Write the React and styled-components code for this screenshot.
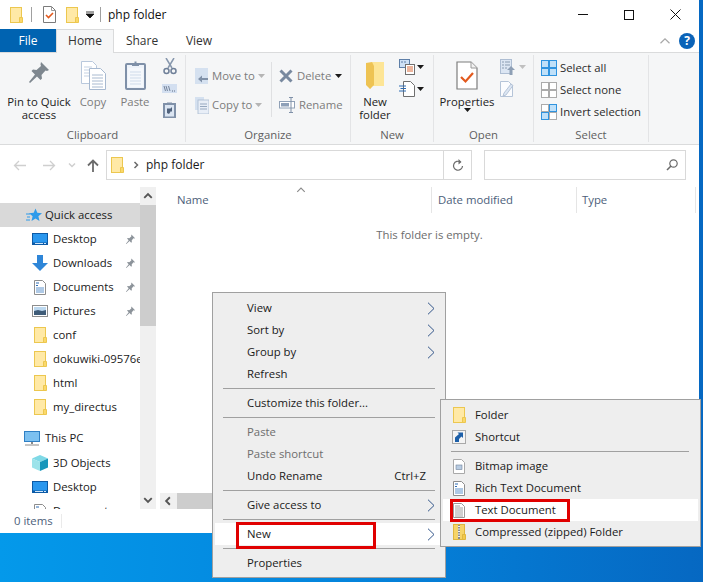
import React from 'react';
import styled, { createGlobalStyle } from 'styled-components';

const GlobalStyle = createGlobalStyle`
  html, body {
    margin: 0;
    padding: 0;
  }
  body {
    width: 703px;
    height: 582px;
    overflow: hidden;
    font-family: "Open Sans", "Noto Sans", sans-serif;
    font-size: 11.35px;
    color: #1a1a1a;
  }
`;

/* icons */
const Folder = ({ w = 13, h = 16 }) => (
  <svg width={w} height={h} viewBox="0 0 13 16">
    <rect x="0.5" y="0.5" width="11" height="15" fill="#ffe9a6" stroke="#ecc74f" />
    <path d="M9.5 15.5v-5h3v5z" fill="#fbd869" stroke="#ecc74f" />
  </svg>
);

const CheckDoc = ({ w = 13, h = 17 }) => (
  <svg width={w} height={h} viewBox="0 0 13 17">
    <path d="M.5.5h8l4 4v12H.5z" fill="#fff" stroke="#7b7b7b" />
    <path d="M8.5.5v4h4" fill="none" stroke="#9a9a9a" />
    <path d="M3 9l2.5 2.5L10 7" fill="none" stroke="#e2591d" strokeWidth="1.6" />
  </svg>
);

const Caret = ({ color = '#1a1a1a' }) => (
  <svg width="7" height="4" viewBox="0 0 7 4">
    <path d="M0 0h7L3.5 4z" fill={color} />
  </svg>
);

const MenuChevron = () => (
  <svg width="8" height="13" viewBox="0 0 8 13">
    <path d="M1 .7l6 5.8-6 5.8" fill="none" stroke="#33568a" strokeWidth="1" />
  </svg>
);

const PinLarge = () => (
  <svg width="22" height="24" viewBox="0 0 22 24">
    <path d="M13 1l8 8-2 1-1.500-.5-4 4.500.5 3.500-1.500 1.500-3.500-3.500L2 22l-1-1 6-7.500L3.500 10 5 8.500l3.500.5L13 5l-.5-1.500z" fill="#7e878f" />
  </svg>
);

const PinSmall = () => (
  <svg width="11" height="11" viewBox="0 0 22 24">
    <path d="M13 1l8 8-2 1-1.500-.5-4 4.500.5 3.500-1.500 1.500-3.500-3.500L2 22l-1-1 6-7.500L3.500 10 5 8.500l3.500.5L13 5l-.5-1.500z" fill="#8c939a" />
  </svg>
);

const CopyLarge = () => (
  <svg width="25" height="29" viewBox="0 0 25 29">
    <path d="M.5.5h11l4 4v18H.5z" fill="#fff" stroke="#b9c8dc" />
    <path d="M3 6h8M3 9h10M3 12h10M3 15h10" stroke="#c5d2e3" />
    <path d="M8.500 7.500h11l5 5v16h-16z" fill="#fff" stroke="#a7b9d0" />
    <path d="M11 14h11M11 17h11M11 20h11M11 23h11M11 26h11" stroke="#a9bad0" />
  </svg>
);

const PasteLarge = () => (
  <svg width="21" height="29" viewBox="0 0 21 29">
    <rect x="1" y="3" width="19" height="25" rx="1" fill="#eef3fa" stroke="#7f90a8" strokeWidth="2" />
    <rect x="3" y="7" width="15" height="19" fill="#f5f8fc" />
    <path d="M5 11h11M5 14h11M5 17h11M5 20h11M5 23h11" stroke="#cfdbea" />
    <path d="M7 5V2h2.500V.5h2V2H14v3z" fill="#7f90a8" />
  </svg>
);

const Scissors = () => (
  <svg width="14" height="17" viewBox="0 0 14 17">
    <path d="M3 0l6 10M11 0L5 10" stroke="#8797ad" strokeWidth="1.500" fill="none" />
    <circle cx="3.500" cy="13" r="2.500" fill="none" stroke="#6f8099" strokeWidth="1.500" />
    <circle cx="10.500" cy="13" r="2.500" fill="none" stroke="#6f8099" strokeWidth="1.500" />
  </svg>
);

const CopyPath = () => (
  <svg width="15" height="9" viewBox="0 0 15 9">
    <rect width="15" height="9" fill="#d3dff0" />
    <path d="M2 2l1.500 5M4 2l1.500 5M6.500 2L8 7" stroke="#5c6c84" strokeWidth=".8" fill="none" />
    <path d="M10 7h1M12 7h1" stroke="#5c6c84" />
  </svg>
);

const PasteShortcut = () => (
  <svg width="13" height="16" viewBox="0 0 13 16">
    <rect x="1" y="2" width="11" height="13.500" fill="#dbe5f2" stroke="#7f90a8" strokeWidth="2" />
    <path d="M4 .5h5V3H4z" fill="#7f90a8" />
    <path d="M4 9V6.500h3.500L9 5v5L8 9l-2 3-2-1z" fill="#50627c" />
  </svg>
);

const MoveTo = () => (
  <svg width="14" height="16" viewBox="0 0 14 16">
    <rect width="13" height="16" fill="#d5e1f0" />
    <path d="M13 10H7V7.500L3 11l4 3.500V12h6z" fill="#8091a8" />
  </svg>
);

const CopyTo = () => (
  <svg width="14" height="17" viewBox="0 0 14 17">
    <rect width="9" height="13" fill="#d5e1f0" />
    <rect x="3" y="3" width="11" height="14" fill="#e8eef7" stroke="#a9bad0" strokeWidth=".8" />
    <path d="M5 7h7M5 9.500h7M5 12h7" stroke="#96a8bf" />
  </svg>
);

const DeleteX = () => (
  <svg width="14" height="14" viewBox="0 0 14 14">
    <path d="M1.500 1.500l11 11M12.500 1.500l-11 11" stroke="#78899f" strokeWidth="3" />
  </svg>
);

const RenameIcon = () => (
  <svg width="16" height="16" viewBox="0 0 16 16">
    <rect x=".5" y="4.500" width="15" height="6.500" fill="#fff" stroke="#90a1b7" />
    <rect x="2" y="6" width="8" height="3.500" fill="#8ea0b8" />
    <path d="M10 .5h4M12 .5v15M10 15.500h4" stroke="#7f90a8" />
  </svg>
);

const NewFolderLarge = () => (
  <svg width="19" height="28" viewBox="0 0 19 28">
    <path d="M0 2h18v22H7l-3 4z" fill="#f3d677" />
    <path d="M6 1h12v24H6z" fill="#fde596" />
    <path d="M0 2l6-1 2 4v19l-4 4-4-4z" fill="#eec353" />
  </svg>
);

const NewItem = () => (
  <svg width="16" height="16" viewBox="0 0 16 16">
    <rect x=".5" y=".5" width="10" height="8" fill="#cde0f5" stroke="#5e7fa8" />
    <path d="M2 3h2M5 3h2" stroke="#5e7fa8" />
    <rect x="6.500" y="5.500" width="9" height="10" fill="#fff" stroke="#6f6f6f" />
    <path d="M8 8h6M8 10h6M8 12h6" stroke="#d96a3a" />
  </svg>
);

const EasyAccess = () => (
  <svg width="16" height="16" viewBox="0 0 16 16">
    <path d="M4.500.5h7l4 4v11h-11z" fill="#fff" stroke="#6f6f6f" />
    <path d="M0 5h7M1.500 7.500H7M0 10h7" stroke="#2f6cb3" />
  </svg>
);

const PropertiesLarge = () => (
  <svg width="22" height="29" viewBox="0 0 22 29">
    <path d="M1 1h14l6 6v21H1z" fill="#fff" stroke="#7d7d7d" strokeWidth="1.200" />
    <path d="M15 1v6h6" fill="#f2f2f2" stroke="#9a9a9a" />
    <path d="M5 16l4.500 4.500L17 12" fill="none" stroke="#e2591d" strokeWidth="2.200" />
  </svg>
);

const OpenIcon = () => (
  <svg width="16" height="16" viewBox="0 0 16 16">
    <rect x=".5" y=".5" width="11" height="14" fill="#dce6f3" stroke="#aebed3" />
    <path d="M2 3h2M5 3h5M2 6h2M5 6h5M2 9h2M5 9h2" stroke="#8a9bb2" strokeWidth="1.200" />
    <path d="M11 7l4 4h-2.500v5h-3v-5H7z" fill="#8e9fb5" />
  </svg>
);

const EditIcon = () => (
  <svg width="14" height="16" viewBox="0 0 14 16">
    <path d="M.5.5h8l4 4v11H.5z" fill="#fbfcfe" stroke="#b5c4d8" />
    <path d="M4 12L11 3l2 1.500L6 14l-3 1z" fill="#dce6f3" stroke="#a8b9cf" strokeWidth=".8" />
  </svg>
);

const SelectGrid = ({ fill = [] }) => (
  <svg width="16" height="16" viewBox="0 0 16 16">
    {[0, 1, 2, 3].map((i) => {
      const on = fill.includes(i);
      return (
        <rect
          key={i}
          x={i % 2 ? 8.5 : 0.5}
          y={i > 1 ? 8.5 : 0.5}
          width="7"
          height="7"
          fill={on ? '#bfe0f9' : '#fff'}
          stroke={on ? '#2f93df' : '#ababab'}
        />
      );
    })}
  </svg>
);

const ArrowLeft = ({ color }) => (
  <svg width="13" height="11" viewBox="0 0 13 11">
    <path d="M13 5.500H1.500M6 1L1.500 5.500 6 10" fill="none" stroke={color} strokeWidth="1.300" />
  </svg>
);

const ArrowRight = ({ color }) => (
  <svg width="13" height="11" viewBox="0 0 13 11">
    <path d="M0 5.500h11.500M7 1l4.500 4.500L7 10" fill="none" stroke={color} strokeWidth="1.300" />
  </svg>
);

const ArrowUp = () => (
  <svg width="12" height="13" viewBox="0 0 12 13">
    <path d="M6 13V2M1 6.500L6 1.500l5 5" fill="none" stroke="#6b6b6b" strokeWidth="1.800" />
  </svg>
);

const MiniChevron = ({ dir = 'down', color = '#5a5a5a', size = 8, width = 1.500 }) => {
  const d = {
    down: 'M1 2.500l3 3 3-3',
    up: 'M1 5.500l3-3 3 3',
    left: 'M5.500 1l-3 3 3 3',
    right: 'M2.500 1l3 3-3 3',
  }[dir];
  return (
    <svg width={size} height={size} viewBox="0 0 8 8">
      <path d={d} fill="none" stroke={color} strokeWidth={width} />
    </svg>
  );
};

const Refresh = () => (
  <svg width="12" height="13" viewBox="0 0 12 13">
    <path d="M10.500 7a4.500 4.500 0 1 1-2-4" fill="none" stroke="#6b6b6b" strokeWidth="1.200" />
    <path d="M6.500 0l3 3-3 2.500z" fill="#6b6b6b" />
  </svg>
);

const SearchGlass = () => (
  <svg width="12" height="12" viewBox="0 0 12 12">
    <circle cx="7.500" cy="4.500" r="3.700" fill="none" stroke="#6b6b6b" strokeWidth="1.200" />
    <path d="M5 7l-4 4" stroke="#6b6b6b" strokeWidth="1.600" />
  </svg>
);

const Star = () => (
  <svg width="16" height="15" viewBox="0 0 16 15">
    <path d="M9.500.5l1.800 4.300 4.700.4-3.600 3 1.100 4.700-4-2.500-4 2.500 1.100-4.700-3.600-3 4.700-.4z" fill="#2f9bea" />
    <path d="M0 6h4M1 9h3M0 12h4" stroke="#2f9bea" />
  </svg>
);

const DesktopIcon = () => (
  <svg width="16" height="12" viewBox="0 0 16 12">
    <rect width="16" height="12" fill="#0c5aa6" />
    <rect x="1" y="1" width="14" height="8.500" fill="#2a97ee" />
    <path d="M3 10.500h8M12 10.500h2" stroke="#d0e6fa" />
  </svg>
);

const DownloadIcon = () => (
  <svg width="16" height="16" viewBox="0 0 16 16">
    <path d="M5 0h6v8h5l-8 8-8-8h5z" fill="#2e86d8" />
  </svg>
);

const DocumentsIcon = () => (
  <svg width="12" height="15" viewBox="0 0 12 15">
    <path d="M.5.5h8l3 3v11H.5z" fill="#fff" stroke="#8d8d8d" />
    <path d="M2 3h3M2 5.500h2" stroke="#2f6cb3" />
    <path d="M2 8h8M2 10h8M2 12h8" stroke="#5e93cc" />
  </svg>
);

const PicturesIcon = () => (
  <svg width="16" height="12" viewBox="0 0 16 12">
    <rect x=".5" y=".5" width="15" height="11" fill="#fff" stroke="#8d8d8d" />
    <rect x="2" y="2" width="12" height="4" fill="#bcd8ef" />
    <path d="M2 6l4-1 4 1 4-1v5H2z" fill="#3f5c78" />
  </svg>
);

const PcIcon = () => (
  <svg width="16" height="15" viewBox="0 0 16 15">
    <rect width="16" height="11" fill="#2f7fc4" />
    <rect x="1" y="1" width="14" height="9" fill="#7cc0f0" />
    <path d="M7 11h2v2H7z" fill="#8a8a8a" />
    <path d="M1 14h14" stroke="#8a8a8a" />
  </svg>
);

const CubeIcon = () => (
  <svg width="16" height="16" viewBox="0 0 16 16">
    <path d="M8 0l8 3.500L8 7 0 3.500z" fill="#7fd9e6" />
    <path d="M0 3.500L8 7v9l-8-3.500z" fill="#9ce3ea" />
    <path d="M16 3.500L8 7v9l8-3.500z" fill="#1796bb" />
  </svg>
);

const ShortcutIcon = () => (
  <svg width="14" height="14" viewBox="0 0 14 14">
    <rect x=".5" y=".5" width="13" height="13" fill="#f4f4f4" stroke="#a9a9a9" />
    <path d="M3 12V7.500L7 4 5.500 2.500H11V8L9.500 6.500 7 9v3z" fill="#1d5fa8" />
  </svg>
);

const BitmapIcon = () => (
  <svg width="12" height="15" viewBox="0 0 12 15">
    <path d="M.5.5h8l3 3v11H.5z" fill="#fff" stroke="#a9a9a9" />
    <rect x="3" y="6" width="6" height="4.500" fill="#b8cce2" stroke="#6f8099" strokeWidth=".6" />
  </svg>
);

const TextDocIcon = () => (
  <svg width="12" height="15" viewBox="0 0 12 15">
    <path d="M.5.5h8l3 3v11H.5z" fill="#fff" stroke="#9a9a9a" />
    <path d="M2 3h5M2 5h8M2 7h8M2 9h8M2 11h8M2 13h8" stroke="#a0a0a0" />
  </svg>
);

const ZipIcon = () => (
  <svg width="13" height="16" viewBox="0 0 13 16">
    <rect x=".5" y=".5" width="11" height="15" fill="#f6d468" stroke="#dfb63f" />
    <path d="M9.500 15.500v-5h3v5z" fill="#f2c94c" stroke="#dfb63f" />
    <path d="M5 1h2v14H5z" fill="#8d8d8d" />
    <path d="M5 2.500h2M5 5h2M5 7.500h2M5 10h2M5 12.500h2" stroke="#f3f3f3" />
  </svg>
);

/* window */
const Desktop = styled.div`
  width: 703px;
  height: 582px;
  background: linear-gradient(90deg, #0499ea 0%, #0484dc 50%, #0668c2 100%);
`;

const Explorer = styled.div`
  width: 699px;
  height: 533px;
  background: #fff;
  display: flex;
  flex-direction: column;
`;

/* text sits a pixel higher than the row's centre, as it does in Segoe UI */
const Label = styled.span`
  padding-bottom: 2px;
`;

const TitleBar = styled.div`
  height: 29px;
  display: flex;
  align-items: center;
  padding-left: 10px;
`;

const QuickIcon = styled.span`
  display: flex;
  margin-right: ${(p) => p.$gap}px;
`;

const TitleSep = styled.span`
  width: 1px;
  height: 15px;
  background: #a0a0a0;
  margin-right: ${(p) => p.$gap}px;
`;

const TitleText = styled.span`
  font-size: 12px;
  color: #111;
`;

const WindowControls = styled.div`
  display: flex;
  align-items: center;
  margin-left: auto;
  height: 100%;
  padding-right: 1px;
`;

const WindowButton = styled.span`
  width: 46px;
  height: 100%;
  display: grid;
  place-content: center;
`;

const TabStrip = styled.div`
  height: 24px;
  box-sizing: border-box;
  display: flex;
  border-bottom: 1px solid #dadbdc;
  font-size: 12px;
`;

const FileTab = styled.div`
  width: 56px;
  height: 23px;
  background: #0063b1;
  color: #fff;
  display: grid;
  place-content: center;
`;

const Tab = styled.div`
  width: ${(p) => p.$width}px;
  height: ${(p) => (p.$active ? 24 : 23)}px;
  box-sizing: border-box;
  display: grid;
  place-content: center;
  color: #333;
  background: ${(p) => (p.$active ? '#f5f6f7' : 'transparent')};
  border: ${(p) => (p.$active ? '1px solid #dadbdc' : 'none')};
  border-bottom: none;
  padding-bottom: ${(p) => (p.$active ? 2 : 0)}px;
`;

const HelpArea = styled.div`
  margin-left: auto;
  display: flex;
  align-items: center;
  gap: 8px;
  height: 23px;
  padding-right: 4px;
`;

const HelpBadge = styled.span`
  width: 16px;
  height: 16px;
  border-radius: 50%;
  background: #0a63b8;
  color: #fff;
  font-weight: 700;
  font-size: 12px;
  display: grid;
  place-content: center;
`;

const Ribbon = styled.div`
  height: 92px;
  box-sizing: border-box;
  display: flex;
  background: #f5f6f7;
  border-bottom: 1px solid #dadbdc;
`;

const Group = styled.section`
  width: ${(p) => p.$width}px;
  box-sizing: border-box;
  display: flex;
  flex-direction: column;
  border-right: 1px solid #e3e4e6;
  margin: 2px 0 2px;
`;

const GroupBody = styled.div`
  height: 73px;
  display: flex;
  padding-left: ${(p) => p.$pad || 0}px;
`;

const GroupLabel = styled.div`
  height: 15px;
  line-height: 15px;
  text-align: center;
  color: #5f5f5f;
`;

const LargeButton = styled.div`
  width: ${(p) => p.$width}px;
  flex: none;
  display: flex;
  flex-direction: column;
  align-items: center;
  text-align: center;
  line-height: 13px;
  padding-top: 4px;
  color: ${(p) => (p.$muted ? '#7c7c7c' : '#222')};
`;

const LargeIcon = styled.span`
  height: 36px;
  display: flex;
  align-items: flex-start;
  justify-content: center;
  padding-top: 2px;
  box-sizing: border-box;
`;

const SmallStack = styled.div`
  display: flex;
  flex-direction: column;
  padding-top: ${(p) => p.$top}px;
  gap: ${(p) => p.$gap}px;
  align-items: ${(p) => p.$align || 'flex-start'};
`;

const OrganizeColumn = styled.div`
  width: ${(p) => p.$width}px;
  flex: none;
  display: flex;
  flex-direction: column;
  gap: 7px;
  padding-top: 10px;
`;

const OrganizeSep = styled.span`
  width: 1px;
  height: 55px;
  margin: 7px 7px 0 0;
  background: #dfe0e2;
`;

const RibbonRow = styled.div`
  height: 22px;
  display: flex;
  align-items: center;
  gap: ${(p) => p.$gap ?? 4}px;
  color: ${(p) => (p.$muted ? '#7c7c7c' : '#2b2b2b')};
  white-space: nowrap;
`;

const AddressRow = styled.div`
  height: 42px;
  box-sizing: border-box;
  padding-top: 5px;
  display: flex;
`;

const NavButtons = styled.div`
  display: grid;
  grid-template-columns: 38px 22px 24px 18px 4px;
  height: 30px;
  align-items: center;
  justify-items: center;
`;

const AddressBox = styled.div`
  width: 366px;
  height: 30px;
  box-sizing: border-box;
  border: 1px solid #d9d9d9;
  display: flex;
  align-items: center;
  padding-left: 4px;
`;

const Crumb = styled.span`
  margin-left: ${(p) => p.$gap}px;
  display: flex;
  font-size: 12px;
`;

const RefreshButton = styled.span`
  margin-left: auto;
  width: 27px;
  height: 100%;
  border-left: 1px solid #d9d9d9;
  display: grid;
  place-content: center;
`;

const SearchBox = styled.div`
  width: 202px;
  height: 30px;
  box-sizing: border-box;
  margin-left: 12px;
  border: 1px solid #d9d9d9;
  display: flex;
  align-items: center;
  justify-content: flex-end;
  padding-right: 7px;
`;

const Body = styled.div`
  height: 322px;
  display: flex;
`;

const NavPane = styled.nav`
  width: 140px;
  flex: none;
  overflow: hidden;
  padding-top: 16px;
  box-sizing: border-box;
`;

const NavRow = styled.div`
  height: 24px;
  display: flex;
  align-items: center;
  white-space: nowrap;
  overflow: hidden;
  padding-left: ${(p) => p.$indent}px;
  margin-top: ${(p) => p.$top || 0}px;
  background: ${(p) => (p.$selected ? '#d9d9d9' : 'transparent')};
  color: #1a1a1a;
`;

const NavIcon = styled.span`
  width: 16px;
  flex: none;
  display: flex;
  justify-content: center;
  margin-right: ${(p) => p.$gap}px;
`;

const NavPin = styled.span`
  margin-left: auto;
  margin-right: 4px;
  display: flex;
`;

const VScroll = styled.div`
  width: 16px;
  flex: none;
  background: #f0f0f0;
  display: flex;
  flex-direction: column;
`;

const ScrollButton = styled.span`
  height: 18px;
  flex: none;
  display: grid;
  place-content: center;
  margin-top: ${(p) => (p.$end ? 'auto' : 0)};
`;

const VThumb = styled.span`
  height: 121px;
  background: #cdcdcd;
`;

const Content = styled.main`
  flex: 1;
  display: flex;
  flex-direction: column;
  padding-left: 4px;
  min-width: 0;
`;

const ColumnHeaders = styled.div`
  height: 26px;
  display: grid;
  grid-template-columns: 272px 145px 119px;
  color: #4c607a;
`;

const HeaderCell = styled.div`
  position: relative;
  display: flex;
  align-items: center;
  padding-left: ${(p) => p.$pad}px;
  border-right: 1px solid #e5e5e5;
`;

const SortCaret = styled.span`
  position: absolute;
  left: 136px;
  top: -2px;
  display: flex;
`;

const EmptyNote = styled.div`
  flex: 1;
  padding-top: 14px;
  text-align: center;
  color: #6d6d6d;
`;

const HScroll = styled.div`
  height: 16px;
  display: flex;
  background: #f0f0f0;
`;

const HButton = styled.span`
  width: 16px;
  display: grid;
  place-content: center;
`;

const HThumb = styled.span`
  margin-left: 1px;
  flex: 1;
  background: #cdcdcd;
`;

const StatusBar = styled.footer`
  height: 24px;
  display: flex;
  align-items: center;
  padding-left: 14px;
  color: #4c607a;
`;

const StatusSep = styled.span`
  width: 1px;
  height: 14px;
  margin-left: 8px;
  background: #eaeaea;
`;

/* context menus sit over the window */
const Menu = styled.div`
  position: absolute;
  left: ${(p) => p.$left}px;
  top: ${(p) => p.$top}px;
  width: ${(p) => p.$width}px;
  box-sizing: border-box;
  padding: 4px 2px 3px;
  background: #eeeeee;
  border: 1px solid #a0a0a0;
`;

const MenuRow = styled.div`
  position: relative;
  height: 22px;
  display: flex;
  align-items: center;
  padding-left: ${(p) => p.$indent}px;
  padding-right: 8px;
  white-space: nowrap;
  color: ${(p) => (p.$disabled ? '#6d6d6d' : '#1a1a1a')};
  background: ${(p) => (p.$hot ? '#fff' : 'transparent')};
`;

const MenuIcon = styled.span`
  width: 16px;
  flex: none;
  display: flex;
  justify-content: center;
  margin-right: 8px;
`;

const MenuEnd = styled.span`
  margin-left: auto;
  display: flex;
  margin-right: ${(p) => p.$inset || 0}px;
`;

const MenuSep = styled.div`
  height: 1px;
  margin: 3px ${(p) => p.$right}px 3px ${(p) => p.$left}px;
  background: #a0a0a0;
`;

const Callout = styled.span`
  position: absolute;
  left: ${(p) => p.$left}px;
  top: ${(p) => p.$top}px;
  width: ${(p) => p.$width}px;
  height: ${(p) => p.$height}px;
  box-sizing: border-box;
  border: 3px solid #e00000;
  pointer-events: none;
`;

const quickAccess = [
  { name: 'Desktop', icon: <DesktopIcon /> },
  { name: 'Downloads', icon: <DownloadIcon /> },
  { name: 'Documents', icon: <DocumentsIcon /> },
  { name: 'Pictures', icon: <PicturesIcon /> },
];

const folders = ['conf', 'dokuwiki-09576e', 'html', 'my_directus'];

const Toolbar = () => (
  <Ribbon>
    <Group $width={186}>
      <GroupBody>
        <LargeButton $width={78}>
          <LargeIcon><PinLarge /></LargeIcon>
          Pin to Quick access
        </LargeButton>
        <LargeButton $width={30} $muted>
          <LargeIcon><CopyLarge /></LargeIcon>
          Copy
        </LargeButton>
        <LargeButton $width={54} $muted>
          <LargeIcon><PasteLarge /></LargeIcon>
          Paste
        </LargeButton>
        <SmallStack $top={3} $gap={9} $align="center">
          <Scissors />
          <CopyPath />
          <PasteShortcut />
        </SmallStack>
      </GroupBody>
      <GroupLabel>Clipboard</GroupLabel>
    </Group>
    <Group $width={165}>
      <GroupBody $pad={9}>
        <OrganizeColumn $width={76}>
          <RibbonRow $muted $gap={3}>
            <MoveTo /><Label>Move to</Label><Caret color="#b5b5b5" />
          </RibbonRow>
          <RibbonRow $muted $gap={3}>
            <CopyTo /><Label>Copy to</Label><Caret color="#b5b5b5" />
          </RibbonRow>
        </OrganizeColumn>
        <OrganizeSep />
        <OrganizeColumn $width={70}>
          <RibbonRow $muted>
            <DeleteX /><Label>Delete</Label><Caret />
          </RibbonRow>
          <RibbonRow $muted>
            <RenameIcon /><Label>Rename</Label>
          </RibbonRow>
        </OrganizeColumn>
      </GroupBody>
      <GroupLabel>Organize</GroupLabel>
    </Group>
    <Group $width={83}>
      <GroupBody>
        <LargeButton $width={48}>
          <LargeIcon><NewFolderLarge /></LargeIcon>
          New folder
        </LargeButton>
        <SmallStack $top={1} $gap={0}>
          <RibbonRow $gap={2}><NewItem /><Caret /></RibbonRow>
          <RibbonRow $gap={2}><EasyAccess /><Caret /></RibbonRow>
        </SmallStack>
      </GroupBody>
      <GroupLabel>New</GroupLabel>
    </Group>
    <Group $width={100}>
      <GroupBody>
        <LargeButton $width={66}>
          <LargeIcon><PropertiesLarge /></LargeIcon>
          Properties
          <Caret />
        </LargeButton>
        <SmallStack $top={1} $gap={0}>
          <RibbonRow $gap={3}><OpenIcon /><Caret color="#c0c0c0" /></RibbonRow>
          <RibbonRow><EditIcon /></RibbonRow>
        </SmallStack>
      </GroupBody>
      <GroupLabel>Open</GroupLabel>
    </Group>
    <Group $width={115}>
      <GroupBody $pad={7}>
        <SmallStack $top={2} $gap={0}>
          <RibbonRow $gap={3}><SelectGrid fill={[0, 1, 2, 3]} /><Label>Select all</Label></RibbonRow>
          <RibbonRow $gap={3}><SelectGrid /><Label>Select none</Label></RibbonRow>
          <RibbonRow $gap={3}><SelectGrid fill={[1, 2]} /><Label>Invert selection</Label></RibbonRow>
        </SmallStack>
      </GroupBody>
      <GroupLabel>Select</GroupLabel>
    </Group>
  </Ribbon>
);

const App = () => (
  <Desktop>
    <GlobalStyle />
    <Explorer>
      <TitleBar>
        <QuickIcon $gap={8}><Folder /></QuickIcon>
        <TitleSep $gap={11} />
        <QuickIcon $gap={10}><CheckDoc /></QuickIcon>
        <QuickIcon $gap={7}><Folder /></QuickIcon>
        <QuickIcon $gap={6}>
          <svg width="8" height="8" viewBox="0 0 8 8">
            <path d="M0 1h8M0 3h8L4 7z" stroke="#111" fill="#111" strokeWidth=".8" />
          </svg>
        </QuickIcon>
        <TitleSep $gap={7} />
        <TitleText>php folder</TitleText>
        <WindowControls>
          <WindowButton>
            <svg width="10" height="1"><rect width="10" height="1" fill="#111" /></svg>
          </WindowButton>
          <WindowButton>
            <svg width="10" height="10" viewBox="0 0 10 10">
              <rect x=".5" y=".5" width="9" height="9" fill="none" stroke="#111" />
            </svg>
          </WindowButton>
          <WindowButton>
            <svg width="11" height="11" viewBox="0 0 11 11">
              <path d="M.5.5l10 10M10.500.5l-10 10" stroke="#111" />
            </svg>
          </WindowButton>
        </WindowControls>
      </TitleBar>

      <TabStrip>
        <FileTab>File</FileTab>
        <Tab $width={58} $active>Home</Tab>
        <Tab $width={56}>Share</Tab>
        <Tab $width={58}>View</Tab>
        <HelpArea>
          <MiniChevron dir="up" color="#a8a8a8" size={12} width={0.8} />
          <HelpBadge>?</HelpBadge>
        </HelpArea>
      </TabStrip>

      <Toolbar />

      <AddressRow>
        <NavButtons>
          <ArrowLeft color="#cfcfcf" />
          <ArrowRight color="#cfcfcf" />
          <MiniChevron color="#cfcfcf" />
          <ArrowUp />
        </NavButtons>
        <AddressBox>
          <Folder w={13} h={16} />
          <Crumb $gap={8}><MiniChevron dir="right" color="#6b6b6b" /></Crumb>
          <Crumb $gap={6}><Label>php folder</Label></Crumb>
          <RefreshButton><Refresh /></RefreshButton>
        </AddressBox>
        <SearchBox><SearchGlass /></SearchBox>
      </AddressRow>

      <Body>
        <NavPane>
          <NavRow $indent={26} $selected>
            <NavIcon $gap={3}><Star /></NavIcon>
            <Label>Quick access</Label>
          </NavRow>
          {quickAccess.map((item) => (
            <NavRow key={item.name} $indent={32}>
              <NavIcon $gap={5}>{item.icon}</NavIcon>
              <Label>{item.name}</Label>
              <NavPin><PinSmall /></NavPin>
            </NavRow>
          ))}
          {folders.map((name) => (
            <NavRow key={name} $indent={32}>
              <NavIcon $gap={5}><Folder /></NavIcon>
              <Label>{name}</Label>
            </NavRow>
          ))}
          <NavRow $indent={24} $top={7}>
            <NavIcon $gap={5}><PcIcon /></NavIcon>
            <Label>This PC</Label>
          </NavRow>
          <NavRow $indent={32} $top={1}>
            <NavIcon $gap={5}><CubeIcon /></NavIcon>
            <Label>3D Objects</Label>
          </NavRow>
          <NavRow $indent={32}>
            <NavIcon $gap={5}><DesktopIcon /></NavIcon>
            <Label>Desktop</Label>
          </NavRow>
          <NavRow $indent={32}>
            <NavIcon $gap={5}><DocumentsIcon /></NavIcon>
            <Label>Documents</Label>
          </NavRow>
        </NavPane>

        <VScroll>
          <ScrollButton><MiniChevron dir="up" color="#555" size={10} /></ScrollButton>
          <VThumb />
          <ScrollButton $end>
            <MiniChevron color="#555" size={10} />
          </ScrollButton>
        </VScroll>

        <Content>
          <ColumnHeaders>
            <HeaderCell $pad={17}>
              <Label>Name</Label>
              <SortCaret><MiniChevron dir="up" color="#8a8a8a" size={10} width={0.9} /></SortCaret>
            </HeaderCell>
            <HeaderCell $pad={6}><Label>Date modified</Label></HeaderCell>
            <HeaderCell $pad={5}><Label>Type</Label></HeaderCell>
          </ColumnHeaders>
          <EmptyNote>This folder is empty.</EmptyNote>
          <HScroll>
            <HButton><MiniChevron dir="left" color="#555" size={10} /></HButton>
            <HThumb />
          </HScroll>
        </Content>
      </Body>

      <StatusBar>
        <Label>0 items</Label>
        <StatusSep />
      </StatusBar>
    </Explorer>

    <Menu $left={212} $top={292} $width={234}>
      <MenuRow $indent={32}><Label>View</Label><MenuEnd><MenuChevron /></MenuEnd></MenuRow>
      <MenuRow $indent={32}><Label>Sort by</Label><MenuEnd><MenuChevron /></MenuEnd></MenuRow>
      <MenuRow $indent={32}><Label>Group by</Label><MenuEnd><MenuChevron /></MenuEnd></MenuRow>
      <MenuRow $indent={32}><Label>Refresh</Label></MenuRow>
      <MenuSep $left={8} $right={8} />
      <MenuRow $indent={32}><Label>Customize this folder...</Label></MenuRow>
      <MenuSep $left={8} $right={8} />
      <MenuRow $indent={32} $disabled><Label>Paste</Label></MenuRow>
      <MenuRow $indent={32} $disabled><Label>Paste shortcut</Label></MenuRow>
      <MenuRow $indent={32}>
        <Label>Undo Rename</Label>
        <MenuEnd $inset={9}><Label>Ctrl+Z</Label></MenuEnd>
      </MenuRow>
      <MenuSep $left={8} $right={8} />
      <MenuRow $indent={32}><Label>Give access to</Label><MenuEnd><MenuChevron /></MenuEnd></MenuRow>
      <MenuSep $left={8} $right={8} />
      <MenuRow $indent={32} $hot><Label>New</Label><MenuEnd><MenuChevron /></MenuEnd></MenuRow>
      <MenuSep $left={8} $right={8} />
      <MenuRow $indent={32}><Label>Properties</Label></MenuRow>
      <Callout $left={23} $top={229} $width={140} $height={27} />
    </Menu>

    <Menu $left={440} $top={399} $width={261}>
      <MenuRow $indent={8}><MenuIcon><Folder w={13} h={16} /></MenuIcon><Label>Folder</Label></MenuRow>
      <MenuRow $indent={8}><MenuIcon><ShortcutIcon /></MenuIcon><Label>Shortcut</Label></MenuRow>
      <MenuSep $left={8} $right={9} />
      <MenuRow $indent={8}><MenuIcon><BitmapIcon /></MenuIcon><Label>Bitmap image</Label></MenuRow>
      <MenuRow $indent={8}><MenuIcon><DocumentsIcon /></MenuIcon><Label>Rich Text Document</Label></MenuRow>
      <MenuRow $indent={8} $hot><MenuIcon><TextDocIcon /></MenuIcon><Label>Text Document</Label></MenuRow>
      <MenuRow $indent={8}><MenuIcon><ZipIcon /></MenuIcon><Label>Compressed (zipped) Folder</Label></MenuRow>
      <Callout $left={9} $top={99} $width={120} $height={23} />
    </Menu>
  </Desktop>
);

export default App;
